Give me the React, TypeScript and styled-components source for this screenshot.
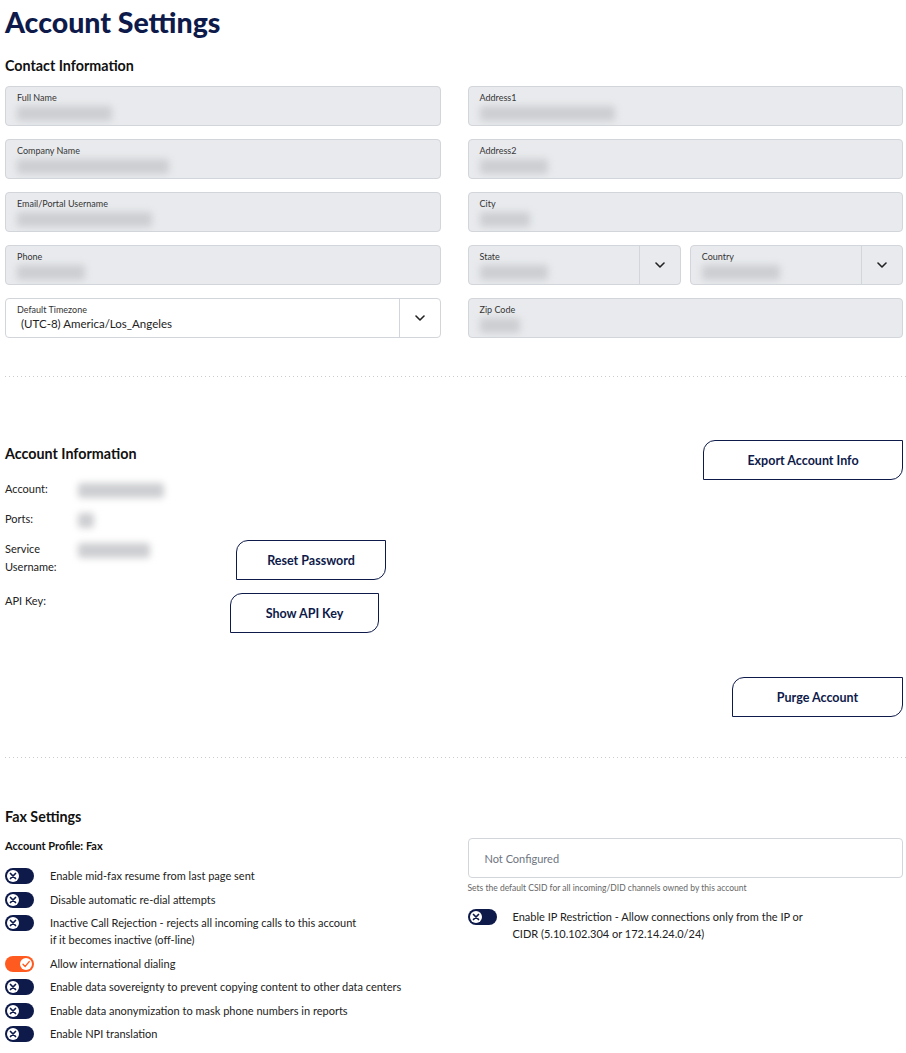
import React from 'react';
import styled, { createGlobalStyle } from 'styled-components';

const NAVY = '#0e1a4a';
const ORANGE = '#ff5a1f';

const GlobalStyle = createGlobalStyle`
	body {
		margin: 0;
		background: #fff;
		font-family: Lato, "Noto Sans", sans-serif;
		color: #222;
	}
`;

// FIELDS
const Field: React.FC<{ label: string; blur?: number; value?: string; select?: boolean; white?: boolean }> = ({
	label,
	blur,
	value,
	select,
	white,
}) => (
	<FieldBox $white={white}>
		<FieldBody>
			<FieldLabel>{label}</FieldLabel>
			{value ? <FieldValue>{value}</FieldValue> : <Blurred $w={blur ?? 0} />}
		</FieldBody>
		{select && (
			<Chevron>
				<svg width="10" height="6" viewBox="0 0 10 6">
					<polyline points="1,1 5,5 9,1" fill="none" stroke="#222" strokeWidth="1.6" strokeLinecap="round" strokeLinejoin="round" />
				</svg>
			</Chevron>
		)}
	</FieldBox>
);

const Toggle: React.FC<{ on?: boolean }> = ({ on }) => (
	<Track $on={on}>
		<Knob>
			{on ? (
				<svg width="10" height="10" viewBox="0 0 10 10">
					<polyline points="2,5.2 4.2,7.4 8.2,2.6" fill="none" stroke={ORANGE} strokeWidth="1.4" strokeLinecap="round" strokeLinejoin="round" />
				</svg>
			) : (
				<svg width="8" height="8" viewBox="0 0 8 8">
					<path d="M1.5 1.5 L6.5 6.5 M6.5 1.5 L1.5 6.5" stroke={NAVY} strokeWidth="1.7" strokeLinecap="round" />
				</svg>
			)}
		</Knob>
	</Track>
);

const faxOptions: { text: React.ReactNode; on?: boolean }[] = [
	{ text: 'Enable mid-fax resume from last page sent' },
	{ text: 'Disable automatic re-dial attempts' },
	{
		text: (
			<>
				Inactive Call Rejection - rejects all incoming calls to this account
				<br />
				if it becomes inactive (off-line)
			</>
		),
	},
	{ text: 'Allow international dialing', on: true },
	{ text: 'Enable data sovereignty to prevent copying content to other data centers' },
	{ text: 'Enable data anonymization to mask phone numbers in reports' },
	{ text: 'Enable NPI translation' },
];

export default function App() {
	return (
		<Page>
			<GlobalStyle />
			<Title>Account Settings</Title>

			<SectionTitle $top={18}>Contact Information</SectionTitle>
			<FieldGrid>
				<Field label="Full Name" blur={95} />
				<Field label="Address1" blur={135} />
				<Field label="Company Name" blur={152} />
				<Field label="Address2" blur={68} />
				<Field label="Email/Portal Username" blur={135} />
				<Field label="City" blur={50} />
				<Field label="Phone" blur={68} />
				<Pair>
					<Field label="State" blur={68} select />
					<Field label="Country" blur={78} select />
				</Pair>
				<Field label="Default Timezone" value="(UTC-8) America/Los_Angeles" select white />
				<Field label="Zip Code" blur={40} />
			</FieldGrid>

			<Divider />

			<AccountSection>
				<AccountLeft>
					<SectionTitle $flush>Account Information</SectionTitle>
					<InfoGrid>
						<InfoLabel>Account:</InfoLabel>
						<InfoValue>
							<Blurred $w={86} />
						</InfoValue>
						<span />

						<InfoLabel>Ports:</InfoLabel>
						<InfoValue>
							<Blurred $w={16} />
						</InfoValue>
						<span />

						<InfoLabel>
							Service
							<br />
							Username:
						</InfoLabel>
						<InfoValue>
							<Blurred $w={72} />
						</InfoValue>
						<OutlineButton $w={150} $shift={11}>
							Reset Password
						</OutlineButton>

						<InfoLabel>API Key:</InfoLabel>
						<span />
						<OutlineButton $w={149} $shift={5} $top={1}>
							Show API Key
						</OutlineButton>
					</InfoGrid>
				</AccountLeft>
				<OutlineButton $w={200}>Export Account Info</OutlineButton>
			</AccountSection>

			<PurgeRow>
				<OutlineButton $w={171}>Purge Account</OutlineButton>
			</PurgeRow>

			<Divider $gap={40} />

			<SectionTitle $top={50}>Fax Settings</SectionTitle>
			<FaxGrid>
				<FaxColumn>
					<ProfileTitle>Account Profile: Fax</ProfileTitle>
					<ToggleList>
						{faxOptions.map((o, i) => (
							<ToggleRow key={i}>
								<Toggle on={o.on} />
								<ToggleText>{o.text}</ToggleText>
							</ToggleRow>
						))}
					</ToggleList>
				</FaxColumn>
				<FaxColumn>
					<CsidInput placeholder="Not Configured" />
					<Helper>Sets the default CSID for all incoming/DID channels owned by this account</Helper>
					<ToggleRow $spaced>
						<Toggle />
						<ToggleText>
							Enable IP Restriction - Allow connections only from the IP or
							<br />
							CIDR (5.10.102.304 or 172.14.24.0/24)
						</ToggleText>
					</ToggleRow>
				</FaxColumn>
			</FaxGrid>
		</Page>
	);
}

const Page = styled.div`
	width: 898px;
	padding: 0 4px 24px 5px;
`;

const Title = styled.h1`
	margin: 5px 0 0;
	font-size: 28.5px;
	line-height: 34px;
	font-weight: 900;
	color: ${NAVY};
`;

const SectionTitle = styled.h2<{ $flush?: boolean; $top?: number }>`
	margin: ${(p) => (p.$flush ? 0 : `${p.$top ?? 17}px`)} 0 0;
	font-size: 14.3px;
	line-height: 18px;
	font-weight: 700;
	color: #111;
`;

const FieldGrid = styled.div`
	display: grid;
	grid-template-columns: 1fr 1fr;
	column-gap: 27px;
	row-gap: 13px;
	margin-top: 11px;
`;

const Pair = styled.div`
	display: grid;
	grid-template-columns: 1fr 1fr;
	gap: 9px;
`;

const FieldBox = styled.div<{ $white?: boolean }>`
	display: flex;
	height: 40px;
	box-sizing: border-box;
	border: 1px solid #d2d5da;
	border-radius: 4px;
	background: ${(p) => (p.$white ? '#fff' : '#e8eaed')};
	overflow: hidden;
`;

const FieldBody = styled.div`
	flex: 1;
	display: flex;
	flex-direction: column;
	padding: 5px 0 0 11px;
	min-width: 0;
`;

const FieldLabel = styled.span`
	font-size: 9px;
	line-height: 12px;
	color: #333;
`;

const FieldValue = styled.span`
	font-size: 11.5px;
	line-height: 16px;
	color: #222;
	padding-left: 4px;
`;

const Blurred = styled.span<{ $w: number }>`
	display: block;
	width: ${(p) => p.$w}px;
	height: 15px;
	margin-top: 2px;
	background: #cdced1;
	border-radius: 3px;
	filter: blur(3.5px);
`;

const Chevron = styled.div`
	width: 40px;
	display: flex;
	align-items: center;
	justify-content: center;
	border-left: 1px solid #d2d5da;
`;

const Divider = styled.div<{ $gap?: number }>`
	height: 1px;
	margin-top: ${(p) => p.$gap ?? 38}px;
	margin-right: -4px;
	background: repeating-linear-gradient(to right, #c8cbd0 0 1px, transparent 1px 4px);
`;

const AccountSection = styled.div`
	display: flex;
	justify-content: space-between;
	align-items: flex-start;
	margin-top: 63px;
`;

const AccountLeft = styled.div`
	padding-top: 5px;
`;

const InfoGrid = styled.div`
	display: grid;
	grid-template-columns: 73px 147px auto;
	row-gap: 12px;
	align-items: start;
	margin-top: 17px;
`;

const InfoLabel = styled.span`
	font-size: 11px;
	line-height: 18px;
	color: #222;
`;

const InfoValue = styled.div`
	padding-top: 1px;
`;

const OutlineButton = styled.button<{ $w: number; $shift?: number; $top?: number }>`
	width: ${(p) => p.$w}px;
	height: 40px;
	margin-left: ${(p) => p.$shift ?? 0}px;
	margin-top: ${(p) => p.$top ?? 0}px;
	background: #fff;
	border: 1px solid ${NAVY};
	border-radius: 12px 0 12px 0;
	font-family: Lato, "Noto Sans", sans-serif;
	font-size: 12.5px;
	font-weight: 700;
	color: ${NAVY};
	cursor: pointer;
`;

const PurgeRow = styled.div`
	display: flex;
	justify-content: flex-end;
	margin-top: 44px;
`;

const FaxGrid = styled.div`
	display: grid;
	grid-template-columns: 1fr 1fr;
	column-gap: 27px;
	margin-top: 11px;
`;

const FaxColumn = styled.div`
	display: flex;
	flex-direction: column;
`;

const ProfileTitle = styled.div`
	font-size: 11px;
	line-height: 18px;
	font-weight: 700;
	color: #111;
`;

const ToggleList = styled.div`
	display: flex;
	flex-direction: column;
	gap: 6.5px;
	margin-top: 12px;
`;

const ToggleRow = styled.div<{ $spaced?: boolean }>`
	display: grid;
	grid-template-columns: 45px 1fr;
	align-items: start;
	margin-top: ${(p) => (p.$spaced ? '14px' : 0)};
`;

const ToggleText = styled.span`
	font-size: 11px;
	line-height: 17px;
	color: #222;
`;

const Track = styled.span<{ $on?: boolean }>`
	display: flex;
	align-items: center;
	justify-content: ${(p) => (p.$on ? 'flex-end' : 'flex-start')};
	width: 29px;
	height: 16px;
	margin-top: 1px;
	padding: 0 2px;
	box-sizing: border-box;
	border-radius: 8px;
	background: ${(p) => (p.$on ? ORANGE : NAVY)};
`;

const Knob = styled.span`
	display: flex;
	align-items: center;
	justify-content: center;
	width: 12px;
	height: 12px;
	border-radius: 50%;
	background: #fff;
`;

const CsidInput = styled.input`
	height: 40px;
	box-sizing: border-box;
	margin-top: 1px;
	padding: 0 16px;
	border: 1px solid #d2d5da;
	border-radius: 4px;
	font-family: Lato, "Noto Sans", sans-serif;
	font-size: 11px;
	outline: none;
	&::placeholder {
		color: #6e7480;
	}
`;

const Helper = styled.div`
	margin-top: 4px;
	font-size: 8.5px;
	line-height: 12px;
	color: #666;
`;
